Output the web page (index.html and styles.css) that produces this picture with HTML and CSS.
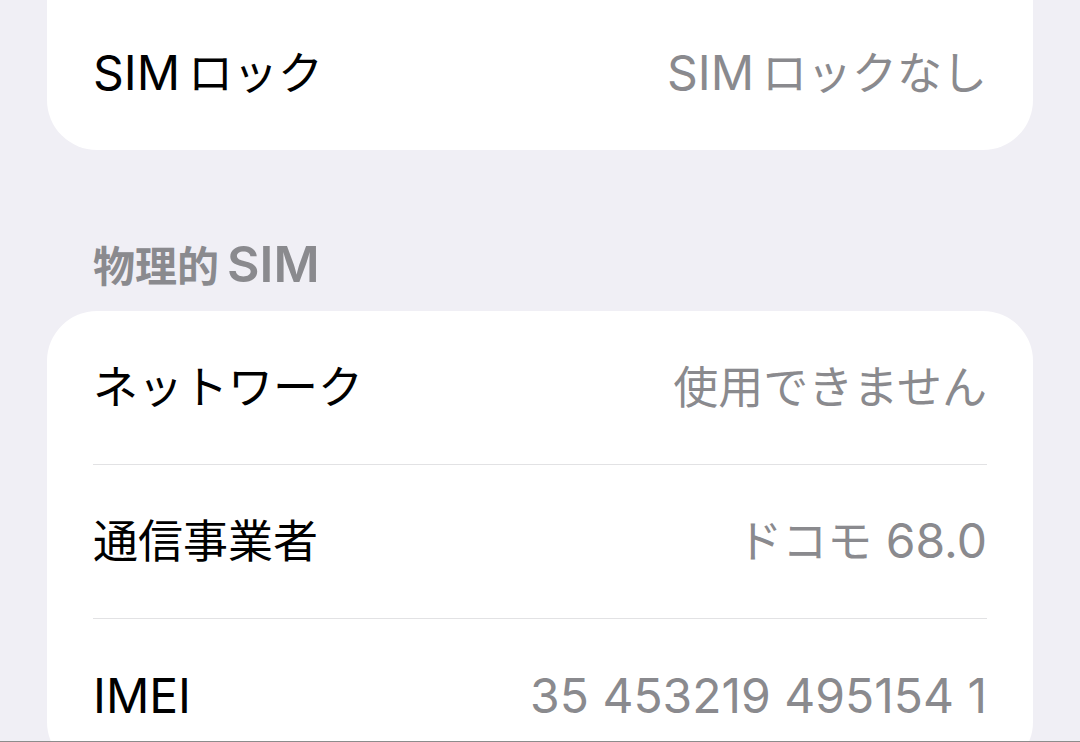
FILE: index.html
```html
<!DOCTYPE html>
<html lang="ja">
<head>
<meta charset="utf-8">
<title>物理的SIM</title>
<link rel="stylesheet" href="styles.css">
</head>
<body>
<div class="screen">
  <div class="group group-top">
    <div class="row">
      <span class="label">SIM<span class="ja gap">ロック</span></span>
      <span class="value">SIM<span class="ja gap">ロックなし</span></span>
    </div>
  </div>

  <h2 class="section-title"><span class="ja">物理的</span><span class="gap">SIM</span></h2>

  <div class="group">
    <div class="row">
      <span class="label ja">ネットワーク</span>
      <span class="value ja">使用できません</span>
    </div>
    <div class="row">
      <span class="label ja">通信事業者</span>
      <span class="value"><span class="ja">ドコモ</span> 68.0</span>
    </div>
    <div class="row">
      <span class="label">IMEI</span>
      <span class="value">35 453219 495154 1</span>
    </div>
  </div>
</div>
</body>
</html>
```

FILE: styles.css
```css
body {
 margin: 0;
 background-color: #f0eff5;
 font-family: Inter, "Noto Sans CJK JP", sans-serif;
}

.screen {
 height: 741px;
 overflow: hidden;
 border-bottom: 1px solid #8c8c8c;
 padding: 0 47px;
}

.group {
 background-color: #fff;
 border-radius: 50px;
 padding: 0 46px 0 46px;
}

.group-top {
 margin-top: -50px;
 padding-top: 47px;
}

.row {
 height: 153px;
 display: flex;
 align-items: center;
 justify-content: space-between;
 border-bottom: 1px solid #e2e2e4;
 font-size: 48px;
 line-height: 60px;
}

.group .row:last-child {
 border-bottom: none;
}

.ja {
 font-size: 45px;
}

.gap {
 margin-left: 8px;
}

.label {
 color: #000;
}

.value {
 color: #8a8a8e;
}

.section-title {
 margin: 0;
 padding: 89px 46px 19px 46px;
 font-size: 50px;
 font-weight: 600;
 line-height: 50px;
 color: #8a8a8e;
}

.section-title .ja {
 font-size: 42px;
}
```
